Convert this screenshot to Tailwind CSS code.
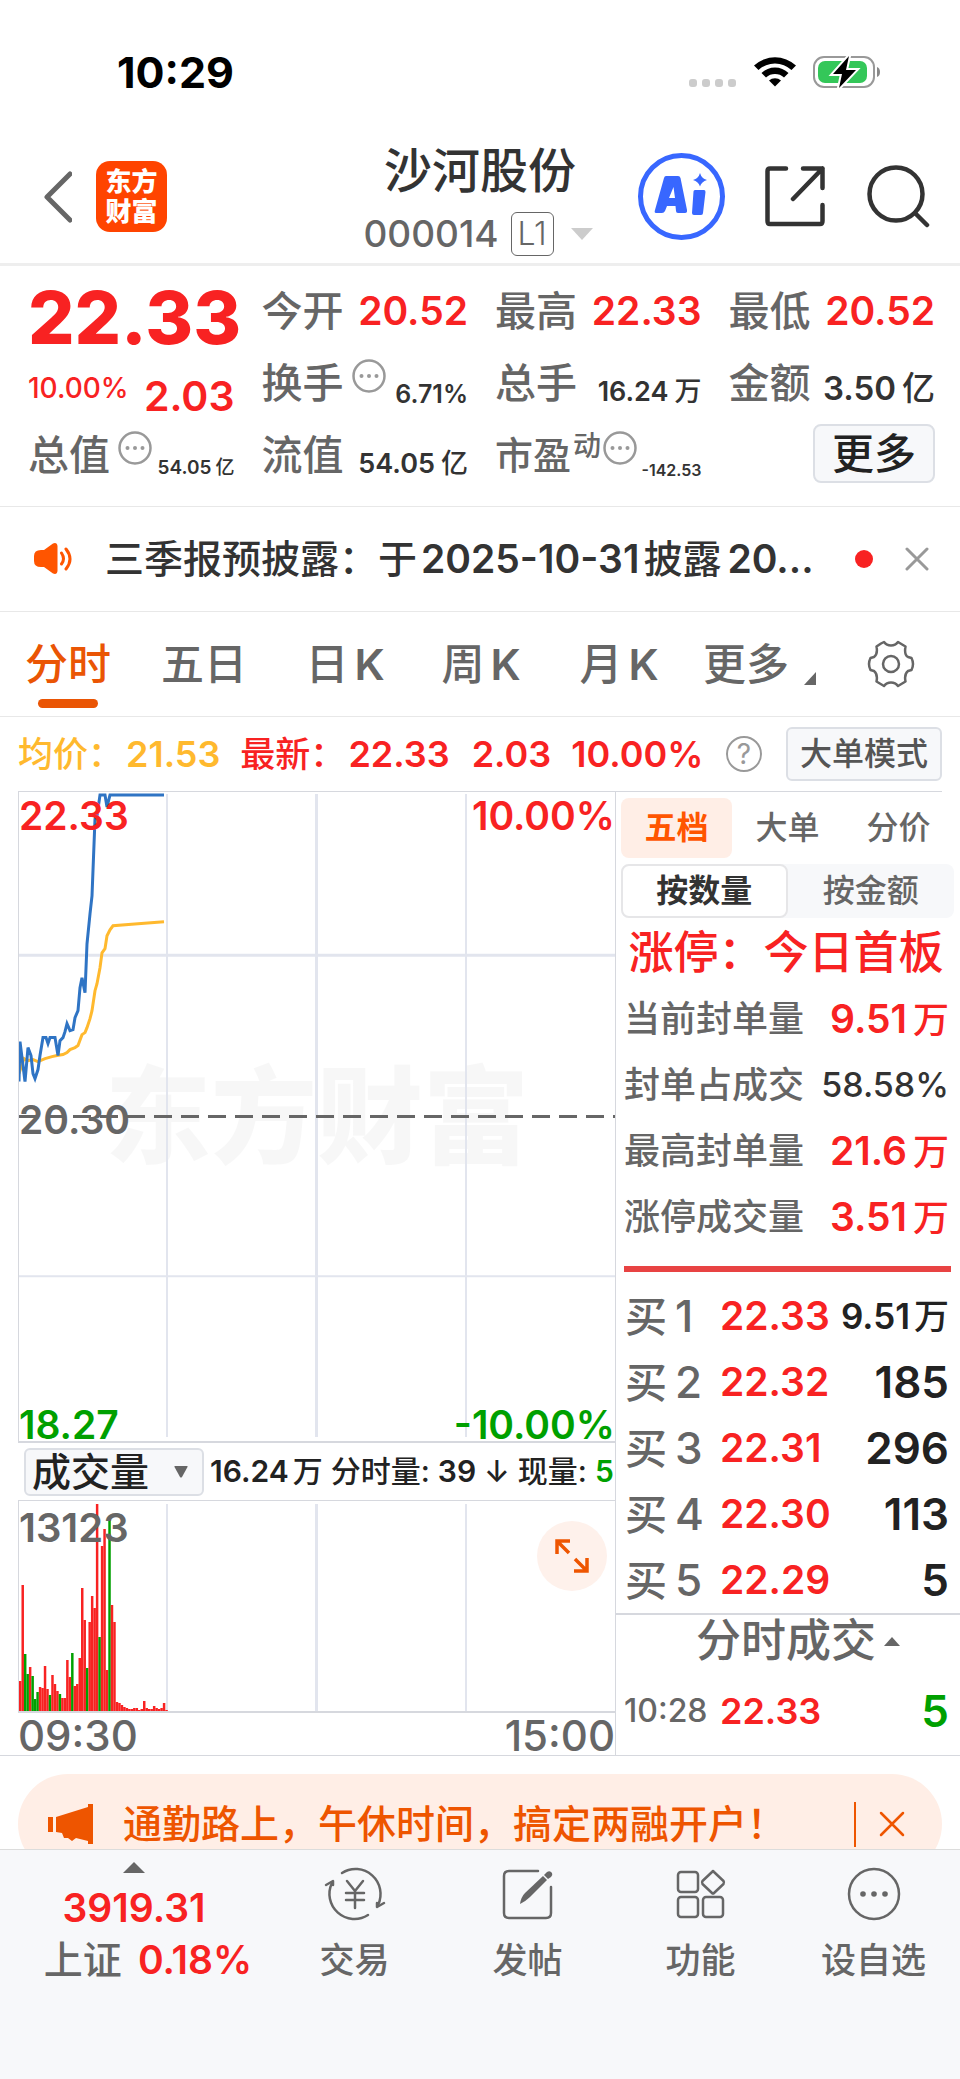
<!DOCTYPE html>
<html lang="zh-CN">
<head>
    <meta charset="UTF-8">
    <meta name="viewport" content="width=device-width, initial-scale=1.0">
    <title>沙河股份 000014</title>
    <script src="https://cdn.jsdelivr.net/npm/@tailwindcss/browser@4"></script>
</head>

<body class="bg-white text-[#333] font-medium font-[Inter,'Noto_Sans_CJK_SC',sans-serif] overflow-x-hidden">

    <!-- status bar -->
    <div class="flex items-center h-[130px] pl-[117px] pr-[79px] pb-[16px] pt-[30px] text-black">
        <span class="text-[43px] leading-[84px] font-bold flex-1">10:29</span>
        <div class="flex items-end gap-[5px] mt-[21px] mr-[18px]">
            <i class="w-2 h-2 rounded-[3px] bg-[#ccc]"></i>
            <i class="w-2 h-2 rounded-[3px] bg-[#ccc]"></i>
            <i class="w-2 h-2 rounded-[3px] bg-[#ccc]"></i>
            <i class="w-2 h-2 rounded-[3px] bg-[#ccc]"></i>
        </div>
        <svg class="w-[42px] h-8 mr-[17px]" viewBox="0 0 42 32">
            <path d="M0 9.500 A31 31 0 0 1 42 9.500 L37.500 14 A24 24 0 0 0 4.500 14 Z"/>
            <path d="M7.500 17 A19.500 19.500 0 0 1 34.500 17 L30 21.500 A13.500 13.500 0 0 0 12 21.500 Z"/>
            <path d="M15 24.500 A9 9 0 0 1 27 24.500 L21 30.500 Z"/>
        </svg>
        <svg class="w-[68px] h-[34px]" viewBox="0 0 68 34">
            <rect x="1" y="2" width="60" height="30" rx="10" fill="none" stroke="#999" stroke-width="2"/>
            <rect x="5" y="6" width="49" height="22" rx="7" fill="#34c759"/>
            <path d="M64 12 Q67 13 67 17 Q67 21 64 22 Z" fill="#888"/>
            <path d="M36 1 L20 19 H29 L26 33 L43 15 H33 Z" stroke="#fff" stroke-width="4" fill="#fff"/>
            <path d="M36 1 L20 19 H29 L26 33 L43 15 H33 Z"/>
        </svg>
    </div>

    <!-- header -->
    <header class="grid grid-cols-[1fr_auto_1fr] items-center h-[136px] border-b-[3px] border-[#eee]">
        <div class="flex items-center pl-11">
            <button type="button" aria-label="返回" class="mr-6">
                <svg class="w-7 h-[52px]" viewBox="0 0 28 52" fill="none" stroke="#666" stroke-width="5" stroke-linecap="round" stroke-linejoin="round"><path d="M26 3 L3 26 L26 49"/></svg>
            </button>
            <div class="w-[71px] h-[71px] rounded-[14px] bg-[#ff4400] text-white font-black text-[26px] leading-[30px] text-center flex flex-col justify-center">
                <span>东方</span><span>财富</span>
            </div>
        </div>
        <div class="pt-2 text-center">
            <h1 class="text-[48px] leading-[66px]">沙河股份</h1>
            <div class="flex items-center h-[59px] pr-1 text-[37px] text-[#666]">
                <span>000014</span>
                <span class="ml-3 w-[43px] h-11 leading-[42px] border border-[#666] rounded-md text-[32px] font-light">L1</span>
                <svg class="ml-[17px] w-[22px] h-3" viewBox="0 0 22 12" fill="#ccc"><path d="M0 0 H22 L11 12 Z"/></svg>
            </div>
        </div>
        <div class="flex items-center justify-end pr-[30px]">
            <button type="button" aria-label="AI" class="mr-[40px]">
                <svg class="w-[87px] h-[87px]" viewBox="0 0 87 87" fill="#3867ff">
                    <circle cx="43.500" cy="43.500" r="41" fill="none" stroke="#3867ff" stroke-width="5"/>
                    <path fill-rule="evenodd" d="M28 23 H40 Q42 23 42.500 25 L49 57 Q49.500 60 47 60 H40 Q38 60 38 58 L37.500 53 H29 L27 58 Q26 60 24 60 H18 Q16 60 17 57 L26 25 Q26.500 23 28 23 Z M35.500 34 L31 45 H37 Z"/>
                    <path d="M57 37 H66 Q67.500 37 67.500 39 L65 60 Q65 62 63 62 H56 Q54 62 54 60 L55.500 38.500 Q55.500 37 57 37 Z"/>
                    <path d="M62 20 Q63.500 25.500 69 27 Q63.500 28.500 62 33.500 Q60.500 28.500 55 27 Q60.500 25.500 62 20 Z"/>
                </svg>
            </button>
            <button type="button" aria-label="分享" class="mr-[41px]">
                <svg class="w-[60px] h-[61px]" viewBox="0 0 60 61" fill="none" stroke="#333" stroke-width="4.500" stroke-linecap="round" stroke-linejoin="round">
                    <path d="M21 2.500 H5 Q2.500 2.500 2.500 5 V55 Q2.500 58 5 58 H55 Q57.500 58 57.500 55 V39"/>
                    <path d="M38 2.500 H57.500 V22 M57.500 2.500 L28 33"/>
                </svg>
            </button>
            <button type="button" aria-label="搜索">
                <svg class="w-[64px] h-[64px]" viewBox="0 0 64 64" fill="none" stroke="#333" stroke-width="4.500" stroke-linecap="round">
                    <circle cx="30" cy="29" r="26.500"/><path d="M49 48 L61 60"/>
                </svg>
            </button>
        </div>
    </header>

    <!-- quote -->
    <section class="grid grid-cols-4 gap-x-[27px] auto-rows-[72px] h-[241px] pt-[9px] pl-7 pr-[25px] border-b border-[#e8e8e8] text-[41px] leading-[72px] whitespace-nowrap">
        <div class="text-[73px] leading-[86px] font-extrabold text-[#f82222]">22.33</div>
        <div class="flex justify-between"><span class="text-[#666]">今开</span><span class="text-[39px] font-semibold text-[#f82222]">20.52</span></div>
        <div class="flex justify-between"><span class="text-[#666]">最高</span><span class="text-[39px] font-semibold text-[#f82222]">22.33</span></div>
        <div class="flex justify-between"><span class="text-[#666]">最低</span><span class="text-[39px] font-semibold text-[#f82222]">20.52</span></div>

        <div class="flex justify-between text-[#f82222]"><span class="text-[28px] leading-[82px]">10.00%</span><span class="font-semibold leading-[98px]">2.03</span></div>
        <div class="flex justify-between">
            <span class="text-[#666] flex">换手
                <svg class="ml-2 mt-3 w-[34px] h-[34px]" viewBox="0 0 34 34" fill="#999"><circle cx="17" cy="17" r="15.500" fill="none" stroke="#999" stroke-width="2.500"/><circle cx="9.500" cy="17" r="2"/><circle cx="17" cy="17" r="2"/><circle cx="24.500" cy="17" r="2"/></svg>
            </span>
            <span class="text-[25px] font-semibold leading-[94px]">6.71%</span>
        </div>
        <div class="flex justify-between"><span class="text-[#666]">总手</span><span class="text-[27px] font-semibold leading-[90px]">16.24<span class="ml-1.5 font-medium">万</span></span></div>
        <div class="flex justify-between"><span class="text-[#666]">金额</span><span class="text-[33px] font-semibold leading-[82px]">3.50<span class="ml-1.5 font-medium">亿</span></span></div>

        <div class="flex justify-between">
            <span class="text-[#666] flex">总值
                <svg class="ml-2 mt-3 w-[34px] h-[34px]" viewBox="0 0 34 34" fill="#999"><circle cx="17" cy="17" r="15.500" fill="none" stroke="#999" stroke-width="2.500"/><circle cx="9.500" cy="17" r="2"/><circle cx="17" cy="17" r="2"/><circle cx="24.500" cy="17" r="2"/></svg>
            </span>
            <span class="text-[19px] font-semibold leading-[98px]">54.05<span class="ml-1 font-medium">亿</span></span>
        </div>
        <div class="flex justify-between"><span class="text-[#666]">流值</span><span class="text-[27px] font-semibold leading-[90px]">54.05<span class="ml-1.5 font-medium">亿</span></span></div>
        <div class="flex justify-between">
            <span class="text-[#666] flex text-[38px]">市盈<span class="ml-0.5 text-[28px] leading-[54px]">动</span>
                <svg class="ml-0.5 mt-3 w-[34px] h-[34px]" viewBox="0 0 34 34" fill="#999"><circle cx="17" cy="17" r="15.500" fill="none" stroke="#999" stroke-width="2.500"/><circle cx="9.500" cy="17" r="2"/><circle cx="17" cy="17" r="2"/><circle cx="24.500" cy="17" r="2"/></svg>
            </span>
            <span class="text-[16px] font-semibold leading-[102px]">-142.53</span>
        </div>
        <div class="flex justify-end">
            <button type="button" class="mt-[5px] w-[122px] h-[59px] leading-[55px] text-[42px] text-[#222] bg-[#f7f8fa] border-2 border-[#dcdfe5] rounded-lg">更多</button>
        </div>
    </section>

    <!-- notice -->
    <section class="flex items-center h-[105px] border-b border-[#e8e8e8] pl-[33px] pr-[31px]">
        <svg class="w-10 h-[34px]" viewBox="0 0 40 34">
            <path d="M8 8 H11 L20 1.500 Q24 0 24.500 4 V29 Q24 33 20 31.500 L11 25 H8 Q1 25 1 19 V14 Q1 8 8 8 Z" fill="#ff5500"/>
            <path d="M28.500 11 Q32.500 17 28.500 22 M33 7 Q41 17 33 27" fill="none" stroke="#ff5500" stroke-width="3" stroke-linecap="round"/>
        </svg>
        <a href="#" class="ml-8 flex-1 text-[39px] leading-[60px] whitespace-nowrap">三季报预披露：于<span class="ml-1 font-semibold">2025-10-31</span><span class="ml-1">披露</span><span class="ml-1.5 font-semibold">20...</span></a>
        <i class="w-[18px] h-[18px] rounded-full bg-[#f82222] mr-8"></i>
        <button type="button" aria-label="关闭">
            <svg class="w-6 h-6" viewBox="0 0 24 24" stroke="#999" stroke-width="3" stroke-linecap="round"><path d="M2 2 L22 22 M22 2 L2 22"/></svg>
        </button>
    </section>

    <!-- period tabs -->
    <nav class="grid grid-cols-[136fr_136fr_146fr_126fr_150fr_104fr_162fr] h-[105px] border-b border-[#e8e8e8] text-[43px] leading-[104px] text-[#666] whitespace-nowrap">
        <button type="button" class="relative text-[#ea5504]">分时<i class="absolute left-1/2 -translate-x-1/2 bottom-2 w-[60px] h-[9px] rounded-full bg-[#ea5504]"></i></button>
        <button type="button">五日</button>
        <button type="button">日<span class="ml-1.5 font-semibold">K</span></button>
        <button type="button">周<span class="ml-1.5 font-semibold">K</span></button>
        <button type="button">月<span class="ml-1.5 font-semibold">K</span></button>
        <button type="button" class="relative">更多<svg class="absolute -right-[18px] bottom-[31px] w-3 h-[13px]" viewBox="0 0 12 13" fill="#666"><path d="M12 0 V13 H0 Z"/></svg></button>
        <button type="button" aria-label="设置" class="flex items-center justify-center pl-6">
            <svg class="w-12 h-12" viewBox="0 0 48 48" fill="none" stroke="#666" stroke-width="2.500" stroke-linejoin="round">
                <path d="M14 3.500 L17 2 Q19.500 5.500 24 5.500 Q28.500 5.500 31 2 L38.500 6.500 Q37 15 41 17 L44.500 18 Q47.500 24 44.500 30 L41 31 Q37 34 38.500 41.500 L31 46 Q28.500 42.500 24 42.500 Q19.500 42.500 17 46 L9.500 41.500 Q11 34 7 31 L3.500 30 Q.5 24 3.500 18 L7 17 Q11 14 9.500 6.500 Z"/>
                <circle cx="24" cy="24" r="8"/>
            </svg>
        </button>
    </nav>

    <!-- price summary -->
    <div class="flex items-center h-[74px] pl-[18px] pr-[18px] text-[36px] font-semibold text-[#f82222] whitespace-nowrap">
        <span class="text-[#ffb92e] text-[35px] font-medium">均价：</span><span class="ml-[3px] text-[#ffb92e]">21.53</span>
        <span class="ml-5 text-[35px] font-medium">最新：</span><span class="ml-[3px]">22.33</span>
        <span class="ml-[22px]">2.03</span>
        <span class="ml-5">10.00%</span>
        <button type="button" aria-label="说明" class="ml-auto w-9 h-9 border-2 border-[#999] rounded-full text-[#999] text-[28px] leading-8 font-normal">?</button>
        <button type="button" class="ml-6 w-[156px] h-[54px] leading-[50px] text-[32px] font-medium text-[#555] bg-[#f7f8fa] border-2 border-[#dcdfe5] rounded-md">大单模式</button>
    </div>

    <main class="grid grid-cols-[598fr_344fr] pl-[18px] border-b border-[#d6d8de] whitespace-nowrap">
        <!-- charts -->
        <section class="border-t border-r border-[#d6d8de]">
            <div class="relative h-[651px] border-l border-b-2 border-[#d6d8de] text-[39px] leading-[46px] font-semibold">
                <div class="absolute inset-x-0 top-[269px] text-center text-[106px] leading-[112px] font-black text-black/3">东方财富</div>
                <svg class="absolute inset-0 w-full h-full" viewBox="0 0 596 650" preserveAspectRatio="none" fill="none">
                    <g stroke="#e2e5ee">
                        <path d="M148 2 V646 M447 2 V646" stroke-width="2"/>
                        <path d="M297.500 2 V646" stroke-width="3"/>
                        <path d="M0 163.500 H596" stroke-width="3"/>
                        <path d="M0 485 H596" stroke-width="2"/>
                    </g>
                    <path d="M0 325 H596" stroke="#666" stroke-width="3" stroke-dasharray="18 9"/>
                    <polyline stroke="#ffb92e" stroke-width="3" points="0,282 5,267 9,269 14,268 19,270 26,267 33,265 38,264 44,263 48,261 51,258 56,256 59,254 63,243 66,241 68,236 71,227 73,219 76,199 78,192 81,176 83,161 86,157 88,144 91,138 94,134 119,132 145,130"/>
                    <polyline stroke="#2f74c4" stroke-width="3" points="0,290 1,250 6,290 9,256 12,264 14,282 16,287 19,278 21,264 24,246 27,246 29,252 31,246 36,246 39,264 41,249 44,246 46,240 48,232 51,239 54,238 56,226 59,219 61,196 63,186 66,201 68,152 71,122 73,104 76,27 78,24 81,3 86,3 88,15 91,3 145,3"/>
                </svg>
                <span class="absolute left-0 top-px text-[#f82222]">22.33</span>
                <span class="absolute right-0 top-px text-[#f82222]">10.00%</span>
                <span class="absolute left-0 top-[305px] text-[#666]">20.30</span>
                <span class="absolute left-0 bottom-[-7px] text-[#00a000]">18.27</span>
                <span class="absolute right-0 bottom-[-7px] text-[#00a000]">-10.00%</span>
            </div>

            <div class="flex items-center h-[57px] pl-1.5 text-[30px] text-[#222]">
                <label class="relative mr-1.5">
                    <select aria-label="指标" class="appearance-none block w-[180px] h-12 pl-1.5 leading-[44px] text-[39px] bg-[#f7f8fa] border-2 border-[#dcdfe5] rounded-md">
                        <option>成交量</option>
                    </select>
                    <svg class="absolute right-4 top-[18px] w-[14px] h-3" viewBox="0 0 14 12" fill="#666"><path d="M1 0 H13 Q14 0 13.500 1 L8 11 Q7 12 6 11 L.5 1 Q0 0 1 0 Z"/></svg>
                </label>
                <span><b class="font-semibold">16.24</b><span class="ml-1">万</span> 分时量: <b class="font-semibold">39</b> ↓ 现量: <b class="font-semibold text-[#00a000]">5</b></span>
            </div>

            <div class="relative h-[213px] border-l border-t border-b-2 border-[#d6d8de]">
                <svg class="absolute inset-0 w-full h-full" viewBox="0 0 596 210" preserveAspectRatio="none">
                    <path d="M148 3 V210 M447 3 V210" stroke="#e2e5ee" stroke-width="2"/>
                    <path d="M297.500 3 V210" stroke="#e2e5ee" stroke-width="3"/>
                    <g id="bars"></g>
                </svg>
                <span class="absolute left-0 top-1 text-[40px] leading-[46px] font-semibold text-[#666]">13123</span>
                <button type="button" aria-label="全屏" class="absolute right-2 top-5 w-[70px] h-[70px] rounded-full bg-[#fef1eb] flex items-center justify-center">
                    <svg class="w-[34px] h-[34px]" viewBox="0 0 34 34" fill="none" stroke="#ee5500" stroke-width="3.500"><path d="M2 15 V2 H15 M2 2 L14 14 M32 19 V32 H19 M32 32 L20 20"/></svg>
                </button>
            </div>
            <div class="flex justify-between h-[42px] text-[42px] leading-[46px] text-[#666]">
                <span>09:30</span><span>15:00</span>
            </div>
        </section>

        <!-- order book -->
        <section>
            <div class="mr-[18px] border-t border-[#d6d8de]"></div>
            <div class="pl-[5px] pr-1.5 text-[32px] text-[#666]">
                <div class="grid grid-cols-3 h-[60px] mt-1.5">
                    <button type="button" class="rounded-lg bg-[#ffeee6] text-[#ff5500] font-bold">五档</button>
                    <button type="button">大单</button>
                    <button type="button">分价</button>
                </div>
                <div class="grid grid-cols-2 h-[54px] mt-1.5 bg-[#f7f8fa] rounded-lg">
                    <button type="button" class="rounded-lg bg-white border-2 border-[#e6e6e8] text-[#333] font-bold">按数量</button>
                    <button type="button">按金额</button>
                </div>
            </div>
            <h2 class="h-[68px] pr-1 text-center text-[45px] leading-[70px] text-[#f82222]">涨停：今日首板</h2>
            <dl class="pl-2 pr-[11px] text-[36px] leading-[66px]">
                <div class="flex justify-between h-[66px]"><dt class="text-[#666]">当前封单量</dt><dd class="text-[39px] font-semibold text-[#f82222]">9.51<span class="ml-1.5 text-[36px] font-medium leading-none">万</span></dd></div>
                <div class="flex justify-between h-[66px]"><dt class="text-[#666]">封单占成交</dt><dd class="text-[34px]">58.58%</dd></div>
                <div class="flex justify-between h-[66px]"><dt class="text-[#666]">最高封单量</dt><dd class="text-[39px] font-semibold text-[#f82222]">21.6<span class="ml-1.5 text-[36px] font-medium leading-none">万</span></dd></div>
                <div class="flex justify-between h-[66px]"><dt class="text-[#666]">涨停成交量</dt><dd class="text-[39px] font-semibold text-[#f82222]">3.51<span class="ml-1.5 text-[36px] font-medium leading-none">万</span></dd></div>
            </dl>
            <div class="ml-2 mr-[9px] mt-4 h-1.5 bg-[#e84343]"></div>

            <table class="w-full mt-[11px] border-b-2 border-[#d6d8de]">
                <tbody id="bids" class="text-[44px] text-[#222]"></tbody>
            </table>
            <button type="button" class="w-full h-[52px] pl-5 flex items-center justify-center text-[45px] text-[#666]">
                分时成交<svg class="ml-2 w-4 h-[9px]" viewBox="0 0 16 9" fill="#666"><path d="M8 0 L16 9 H0 Z"/></svg>
            </button>
            <div class="flex items-center h-[87px] pl-2 pr-[11px] font-semibold">
                <span class="w-24 text-[32px] font-medium text-[#666]">10:28</span>
                <span class="text-[36px] text-[#f82222]">22.33</span>
                <span class="ml-auto text-[44px] text-[#00a000]">5</span>
            </div>
        </section>
    </main>

    <!-- promo, runs under the bottom bar -->
    <div class="h-[93px] pt-[18px] px-[18px] overflow-hidden">
        <div class="flex items-center h-[100px] rounded-full bg-[#ffeee6] pl-[29px] pr-[37px] text-[#ee5500]">
            <svg class="w-[47px] h-10" viewBox="0 0 47 40" fill="#ee5500"><path d="M1 13 H6 V28 H1 Z M9 13 L41 3 V0 H46 V40 H41 V37 L29 34 L25 37 L21 34 H17 L15 29 L9 28 Z"/></svg>
            <a href="#" class="ml-[29px] flex-1 text-[39px] leading-[60px] whitespace-nowrap">通勤路上，午休时间，搞定两融开户！</a>
            <i class="w-0.5 h-[45px] bg-[#ee5500] mr-[23px]"></i>
            <button type="button" aria-label="关闭">
                <svg class="w-[26px] h-[26px]" viewBox="0 0 26 26" stroke="#ee5500" stroke-width="2.500" stroke-linecap="round"><path d="M2 2 L24 24 M24 2 L2 24"/></svg>
            </button>
        </div>
    </div>

    <!-- bottom bar -->
    <footer class="relative grid grid-cols-[268fr_173fr_173fr_173fr_173fr] h-[230px] border-t border-[#dcdcdc] bg-[#f7f8fa] text-[35px] text-[#666] leading-[52px] whitespace-nowrap">
        <a href="#" class="flex flex-col items-center pt-3">
            <svg class="w-[22px] h-[11px]" viewBox="0 0 22 11" fill="#666"><path d="M11 0 L22 11 H0 Z"/></svg>
            <span class="mt-[9px] text-[39px] font-semibold text-[#f82222]">3919.31</span>
            <span class="pl-7 text-[39px]">上证<span class="ml-4 font-semibold text-[#f82222]">0.18%</span></span>
        </a>
        <button type="button" class="flex flex-col items-center pt-4">
            <svg class="w-[62px] h-14 mb-3" viewBox="0 0 62 56" fill="none" stroke="#666" stroke-width="2.500" stroke-linecap="round" stroke-linejoin="round">
                <path d="M18 7 A25 25 0 0 1 54 39 M44 49 A25 25 0 0 1 8 17"/>
                <path d="M2 19 L9 15 V19 M60 37 L53 41 V37"/>
                <path d="M23 15 L31 25 L39 15 M31 25 V42 M22 27 H40 M22 34 H40"/>
            </svg>
            交易
        </button>
        <button type="button" class="flex flex-col items-center pt-4">
            <svg class="w-14 h-14 mb-3" viewBox="0 0 56 56" fill="none" stroke="#666" stroke-width="2.500" stroke-linecap="round">
                <path d="M38 5 H9 Q4 5 4 10 V47 Q4 52 9 52 H46 Q51 52 51 47 V21"/>
                <path d="M20 38 Q21 31 25 27 L43 10 L47 14 L30 31 Q26 35 20 38 Z" fill="#666" stroke="none"/>
                <path d="M44 9 L47 6 Q50 4 52 7 Q53 9 51 11 L48 13 Z" fill="#666" stroke="none"/>
            </svg>
            发帖
        </button>
        <button type="button" class="flex flex-col items-center pt-4">
            <svg class="w-14 h-14 mb-3" viewBox="0 0 56 56" fill="none" stroke="#666" stroke-width="2.500" stroke-linejoin="round">
                <rect x="5" y="6" width="20" height="20" rx="3"/>
                <rect x="5" y="31" width="20" height="20" rx="3"/>
                <rect x="30" y="31" width="20" height="20" rx="3"/>
                <path d="M39 6 L40 5 L41 6 L50.500 15 Q51.500 16.500 50.500 18 L41 27 Q40 28 39 27 L29.500 18 Q28.500 16.500 29.500 15 Z"/>
            </svg>
            功能
        </button>
        <button type="button" class="flex flex-col items-center pt-4">
            <svg class="w-14 h-14 mb-3" viewBox="0 0 56 56" fill="#666"><circle cx="28" cy="28" r="25" fill="none" stroke="#666" stroke-width="2.500"/><circle cx="17" cy="28" r="2.800"/><circle cx="28" cy="28" r="2.800"/><circle cx="39" cy="28" r="2.800"/></svg>
            设自选
        </button>
    </footer>

    <script>
        // volume per minute, negative = falling minute
        const volumes = [
            30, 126, -57, -37, 44, -35, -12, -19, 24, 23, 45, 22, -16, 36, 27, 20, -17, 13, 13, 51,
            34, -58, 25, 27, 53, 123, 91, -43, 89, 115, 103, 207, -74, 165, 182, 41, -193, 106, 89, 9,
            8, 6, 4, 3, 2, 2, 3, 3, 1, 2, 10, 3, 2, 2, 5, 3, 2, 3, 8, 1
        ];
        const step = 2.48;

        document.getElementById("bars").innerHTML = volumes.map((v, i) => {
            const h = Math.abs(v);
            return `<rect x="${i * step}" y="${210 - h}" width="${step}" height="${h}" fill="${v < 0 ? "#00a000" : "#f82222"}"/>`;
        }).join("");

        const bids = [
            { price: "22.33", qty: "9.51<span class='ml-1 font-medium leading-none'>万</span>", small: true },
            { price: "22.32", qty: "185" },
            { price: "22.31", qty: "296" },
            { price: "22.30", qty: "113" },
            { price: "22.29", qty: "5" }
        ];

        document.getElementById("bids").innerHTML = bids.map((bid, i) => `
            <tr class="h-[66px] font-semibold">
                <th scope="row" class="p-0 pl-[9px] w-[104px] text-left font-medium text-[#666] leading-[66px]"><span class="text-[42px] leading-none">买</span><span class="ml-2">${i + 1}</span></th>
                <td class="p-0 text-[39px] leading-[66px] text-[#f82222]">${bid.price}</td>
                <td class="p-0 pr-[11px] text-right leading-[66px] ${bid.small ? "text-[35px]" : ""}">${bid.qty}</td>
            </tr>`).join("");
    </script>

</body>
</html>
